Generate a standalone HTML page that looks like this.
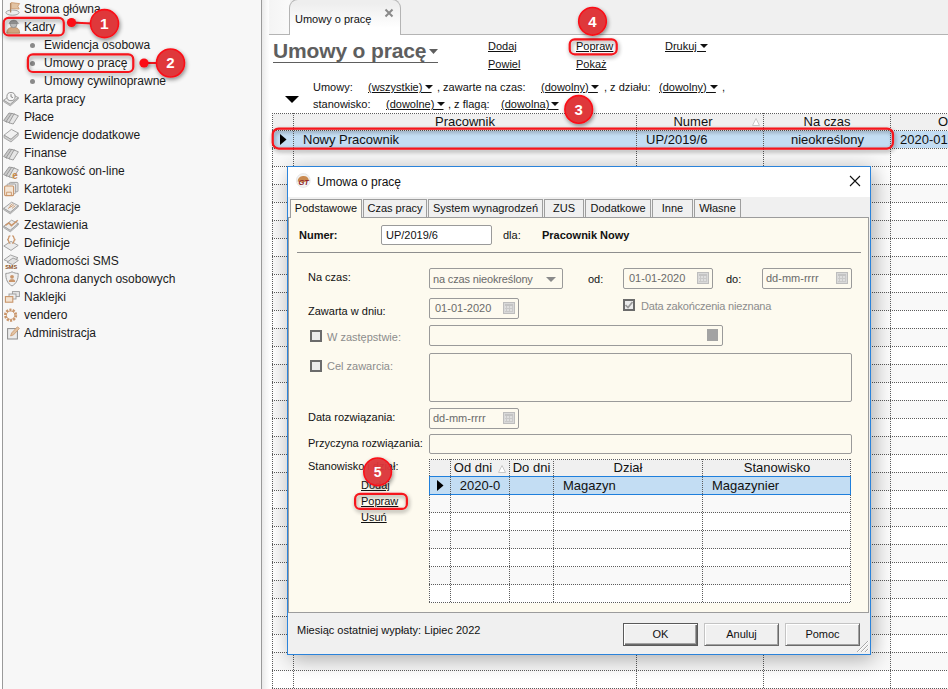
<!DOCTYPE html>
<html lang="pl">
<head>
<meta charset="utf-8">
<title>Umowy o pracę</title>
<style>
*{box-sizing:border-box;margin:0;padding:0}
html,body{width:948px;height:689px;overflow:hidden;background:#fff}
body{position:relative;font-family:"Liberation Sans",sans-serif;font-size:12px;color:#111}
.a{position:absolute;white-space:nowrap}
/* ---------- sidebar ---------- */
#side{left:2px;top:-8px;width:260px;height:705px;background:#f7f7f7;border:1px solid #9a9a9a;border-radius:0 7px 0 0}
#sideshadow{left:262px;top:0;width:8px;height:689px;background:linear-gradient(to right,#e9e9e9,#f8f8f8 60%,#fff)}
.it{left:24px;height:18px;line-height:18px;font-size:12px;color:#1a1a1a}
.sub{left:44px}
.bl{width:5px;height:5px;border-radius:50%;background:#8a8a8a;left:30px}
.ic{left:3px;width:16px;height:16px}
/* ---------- main ---------- */
#tabbar{left:270px;top:0;width:678px;height:34px;background:#f0f0f0}
#tabline{left:269px;top:34px;width:679px;height:1px;background:#b4b4b4}
#tableft{left:269px;top:0;width:21px;height:34px;background:linear-gradient(to right,#f4f4f4,#fafafa)}
#tab{left:289px;top:-1px;width:112px;height:36px;background:linear-gradient(#eeeeee 10%,#fff 80%);border:1px solid #b4b4b4;border-bottom:0;border-radius:9px 9px 0 0}
#title{left:273px;top:37px;font-size:21px;letter-spacing:-.15px;font-weight:700;color:#5e5e5e;line-height:28px}
.lk{font-size:11px;color:#111;text-decoration:underline;line-height:14px}
.ft{font-size:11px;color:#111;line-height:14px}
.tri{width:8px;height:4px;background:#111;clip-path:polygon(0 0,100% 0,50% 100%)}
/* ---------- grid ---------- */
.hl{height:1px;background:repeating-linear-gradient(to right,#6e6e6e 0 1px,transparent 1px 2px)}
.vl{width:1px;background:repeating-linear-gradient(to bottom,#6e6e6e 0 1px,transparent 1px 2px)}
.gh{font-size:13px;line-height:16px;color:#111;text-align:center}
.gc{font-size:13px;line-height:17px;color:#111}
/* ---------- dialog ---------- */
#dlg{left:287px;top:166px;width:584px;height:489px;background:#f0f0f0;border:1px solid #2b83da;box-shadow:3px 4px 20px 0 rgba(0,0,0,.32)}
#dlg .a{position:absolute}
#dw{left:1px;top:0;width:0;height:0}
#dw>.a{margin-top:-1px}
#dtitle{left:0;top:0;width:582px;height:30px;background:#fff}
#page{left:-1px;top:51px;width:581px;height:396px;background:#fdfaef;border:1px solid #9c9c9c}
.dt{top:33px;height:18px;border:1px solid #9e9e9e;border-bottom:0;background:#f0f0f0;font-size:11px;line-height:16px;text-align:center;color:#111}
.dt.on{top:33px;height:19px;background:#fdfaef;line-height:16px;z-index:2}
.lb{font-size:11px;line-height:14px;color:#111}
.dis{color:#8c8c8c}
.fld{border:1px solid #9a9a9a;border-radius:2px;background:#fdfaef;font-size:11px;line-height:18px;color:#6a6a6a;padding-left:5px}
.cb{width:12px;height:12px;border:2px solid #6b6b6b;background:#ececec}
.btn{top:457px;height:23px;width:75px;border:1px solid;border-color:#c4c4c4 #6a6a6a #6a6a6a #c4c4c4;background:#f0f0f0;box-shadow:inset 1px 1px 0 #fff,inset -1px -1px 0 #a2a2a2;font-size:11px;line-height:20px;text-align:center;color:#111}
.cal{width:12px;height:12px;border:1px solid #bdbdbd;background:linear-gradient(#c4c4c4 0 3px,transparent 3px),repeating-linear-gradient(to bottom,transparent 0 2px,#c9c9c9 2px 3px),repeating-linear-gradient(to right,#dedede 0 2px,#c9c9c9 2px 3px),#d6d6d6;background-size:auto,auto;box-shadow:inset 0 0 0 1px #d9d9d9}
.ih{font-size:13px;line-height:16px;text-align:center;color:#111}
</style>
</head>
<body>

<!-- ================= SIDEBAR ================= -->
<div class="a" id="side"></div>
<div class="a" id="sideshadow"></div>
<div id="sideitems">
<div class="a it" style="top:0px">Strona główna</div>
<div class="a it" style="top:18px">Kadry</div>
<div class="a bl" style="top:43px"></div><div class="a it sub" style="top:36px">Ewidencja osobowa</div>
<div class="a bl" style="top:61px"></div><div class="a it sub" style="top:54px">Umowy o pracę</div>
<div class="a bl" style="top:79px"></div><div class="a it sub" style="top:72px">Umowy cywilnoprawne</div>
<div class="a it" style="top:90px">Karta pracy</div>
<div class="a it" style="top:108px">Płace</div>
<div class="a it" style="top:126px">Ewidencje dodatkowe</div>
<div class="a it" style="top:144px">Finanse</div>
<div class="a it" style="top:162px">Bankowość on-line</div>
<div class="a it" style="top:180px">Kartoteki</div>
<div class="a it" style="top:198px">Deklaracje</div>
<div class="a it" style="top:216px">Zestawienia</div>
<div class="a it" style="top:234px">Definicje</div>
<div class="a it" style="top:252px">Wiadomości SMS</div>
<div class="a it" style="top:270px">Ochrona danych osobowych</div>
<div class="a it" style="top:288px">Naklejki</div>
<div class="a it" style="top:306px">vendero</div>
<div class="a it" style="top:324px">Administracja</div>
</div>
<svg class="a ic" style="top:1px;left:5px" viewBox="0 0 16 16"><ellipse cx="7.5" cy="11.6" rx="6.6" ry="2.6" fill="#ededed" stroke="#9a9a9a" stroke-width="0.9"/><path d="M5.6 2V11.5" stroke="#a98462" stroke-width="1.3"/><path d="M6.2 1.6L14.6 2.6L12.8 5.2L14.2 8L6.2 7.6Z" fill="#e2c3a3" stroke="#c9956a" stroke-width="0.8"/></svg>
<svg class="a ic" style="top:18px;left:5px" viewBox="0 0 16 16"><path d="M1.8 15.2C1.8 10.6 4.6 9.4 8.4 9.4C12.2 9.4 14.6 10.8 14.6 15.2Z" fill="#cfa580" stroke="#b38458" stroke-width="0.8"/><circle cx="8.6" cy="6.2" r="3.4" fill="#bdbdbd" stroke="#8a8a8a" stroke-width="0.8"/><path d="M4.6 4.6C5.4 1.6 11.6 1.4 12.6 4.4L13.6 5.4L4 5.6Z" fill="#9c9c9c" stroke="#808080" stroke-width="0.6"/></svg>
<svg class="a ic" style="top:91px" viewBox="0 0 16 16"><path d="M0.7 9.3L8.6 3.2L15.3 6.6L7.2 13.4Z" fill="#ececec" stroke="#9a9a9a" stroke-width="0.9"/><path d="M0.7 9.3L7.2 13.4L15.3 6.6L15.3 8L7.2 14.9L0.7 10.7Z" fill="#d0d0d0" stroke="#9a9a9a" stroke-width="0.7"/><circle cx="8" cy="5.6" r="4.1" fill="#f6f6f6" stroke="#8a8a8a" stroke-width="0.9"/><path d="M8 3.2V5.8L10 6.6" stroke="#777" stroke-width="0.9" fill="none"/></svg>
<svg class="a ic" style="top:109px" viewBox="0 0 16 16"><path d="M0.6 11.5L6 4L9.2 4.6L4 13.2Z" fill="#c8c8c8" stroke="#8c8c8c" stroke-width="0.8"/><path d="M3.2 12.6L8.6 4.4L12 5.2L7 14Z" fill="#d6d6d6" stroke="#8c8c8c" stroke-width="0.8"/><path d="M6 13.8L11 5L15.4 6.8L10.2 15Z" fill="#e6e6e6" stroke="#8c8c8c" stroke-width="0.8"/></svg>
<svg class="a ic" style="top:127px" viewBox="0 0 16 16"><path d="M1 8.2L8.4 2.4L15.2 6L8 12.4Z" fill="#f1f1f1" stroke="#9a9a9a" stroke-width="0.9"/><path d="M1 8.2L8 12.4L15.2 6V8.6L8 15L1 10.8Z" fill="#d2d2d2" stroke="#9a9a9a" stroke-width="0.8"/></svg>
<svg class="a ic" style="top:145px" viewBox="0 0 16 16"><path d="M0.6 11.5L6 4L9.2 4.6L4 13.2Z" fill="#c8c8c8" stroke="#8c8c8c" stroke-width="0.8"/><path d="M3.2 12.6L8.6 4.4L12 5.2L7 14Z" fill="#d6d6d6" stroke="#8c8c8c" stroke-width="0.8"/><path d="M6 13.8L11 5L15.4 6.8L10.2 15Z" fill="#e6e6e6" stroke="#8c8c8c" stroke-width="0.8"/></svg>
<svg class="a ic" style="top:163px" viewBox="0 0 16 16"><path d="M0.6 11.5L6 4L9.2 4.6L4 13.2Z" fill="#c8c8c8" stroke="#8c8c8c" stroke-width="0.8"/><path d="M3.2 12.6L8.6 4.4L12 5.2L7 14Z" fill="#d6d6d6" stroke="#8c8c8c" stroke-width="0.8"/><path d="M6 13.8L11 5L15.4 6.8L10.2 15Z" fill="#e6e6e6" stroke="#8c8c8c" stroke-width="0.8"/><text x="9.2" y="15.6" font-family="'Liberation Sans',sans-serif" font-weight="700" font-size="10px" fill="#c98a4a">e</text></svg>
<svg class="a ic" style="top:181px" viewBox="0 0 16 16"><rect x="6.4" y="1.4" width="8.6" height="9.4" rx="1" fill="#e0e0e0" stroke="#9a9a9a" stroke-width="0.9"/><rect x="4" y="3" width="8.6" height="9.6" rx="1" fill="#ebebeb" stroke="#9a9a9a" stroke-width="0.9"/><rect x="1.6" y="5" width="9" height="9.6" rx="1" fill="#f4e6d6" stroke="#c9956a" stroke-width="1.1"/><path d="M3.6 14V11.2H8.4V14" fill="none" stroke="#c9956a" stroke-width="0.9"/></svg>
<svg class="a ic" style="top:199px" viewBox="0 0 16 16"><path d="M0.7 9.3L8.6 3.2L15.3 6.6L7.2 13.4Z" fill="#ececec" stroke="#9a9a9a" stroke-width="0.9"/><path d="M0.7 9.3L7.2 13.4L15.3 6.6L15.3 8L7.2 14.9L0.7 10.7Z" fill="#d0d0d0" stroke="#9a9a9a" stroke-width="0.7"/><path d="M6.4 7.2L9.6 4.8M7.6 8.2L11 5.6M5 9.6L8 7.4M9 9.4L12.4 6.6" stroke="#c9956a" stroke-width="0.9"/></svg>
<svg class="a ic" style="top:217px" viewBox="0 0 16 16"><path d="M0.7 9.3L8.6 3.2L15.3 6.6L7.2 13.4Z" fill="#ececec" stroke="#9a9a9a" stroke-width="0.9"/><path d="M0.7 9.3L7.2 13.4L15.3 6.6L15.3 8L7.2 14.9L0.7 10.7Z" fill="#d0d0d0" stroke="#9a9a9a" stroke-width="0.7"/><path d="M2.4 8.4L6 6L8.4 8.6L14.8 3.2" fill="none" stroke="#c9956a" stroke-width="1.5"/></svg>
<svg class="a ic" style="top:235px" viewBox="0 0 16 16"><path d="M0.8 11L8 6.4L15.2 10.4L8 15.4Z" fill="#ececec" stroke="#9a9a9a" stroke-width="0.9"/><path d="M7.4 0.8C5.8 0.8 5.8 1.6 5.8 2.6C5.8 3.8 5.4 4.4 4.2 4.6C5.4 4.8 5.8 5.4 5.8 6.6C5.8 7.6 5.8 8.4 7.4 8.4M9.2 0.8C10.8 0.8 10.8 1.6 10.8 2.6C10.8 3.8 11.2 4.4 12.4 4.6C11.2 4.8 10.8 5.4 10.8 6.6C10.8 7.6 10.8 8.4 9.2 8.4" fill="none" stroke="#c9956a" stroke-width="1.3"/></svg>
<svg class="a ic" style="top:253px" viewBox="0 0 16 16"><path d="M1 6.8L7.6 2L15 4.8L8.4 9.8Z" fill="#ededed" stroke="#9a9a9a" stroke-width="0.9"/><path d="M4 9.2L10 5L15.4 7.4L9.6 11.6Z" fill="#e2e2e2" stroke="#9a9a9a" stroke-width="0.9"/><text x="8.2" y="15.6" text-anchor="middle" font-family="'Liberation Sans',sans-serif" font-weight="700" font-size="5.6px" fill="#8a4f22">SMS</text></svg>
<svg class="a ic" style="top:271px;left:4px" viewBox="0 0 16 16"><path d="M8 0.8C10 2 12.2 2.4 14.2 2.4C14.4 8.4 12.4 12.6 8 15C3.6 12.6 1.6 8.4 1.8 2.4C3.8 2.4 6 2 8 0.8Z" fill="#efefef" stroke="#9a9a9a" stroke-width="1"/><circle cx="8" cy="5.8" r="1.9" fill="#c9956a"/><path d="M4.8 11C4.8 8.6 6.2 8.2 8 8.2C9.8 8.2 11.2 8.6 11.2 11Z" fill="#c9956a"/></svg>
<svg class="a ic" style="top:289px;left:4px" viewBox="0 0 16 16"><rect x="8.4" y="2.6" width="7" height="5" fill="#e6e6e6" stroke="#9a9a9a" stroke-width="0.9"/><rect x="5" y="5" width="7" height="5" fill="#ededed" stroke="#9a9a9a" stroke-width="0.9"/><rect x="1.4" y="7.6" width="7.4" height="5.6" fill="#f3e3d1" stroke="#c9956a" stroke-width="1.1"/></svg>
<svg class="a ic" style="top:307px;left:3px" viewBox="0 0 16 16"><circle cx="7.6" cy="8.2" r="5.3" fill="none" stroke="#c9956a" stroke-width="2.6" stroke-dasharray="2.1 1.2"/><circle cx="7.6" cy="8.2" r="4.2" fill="none" stroke="#c9956a" stroke-width="0.8"/></svg>
<svg class="a ic" style="top:325px;left:5px" viewBox="0 0 16 16"><rect x="2.6" y="3.6" width="9.8" height="10.4" fill="#ececec" stroke="#8c8c8c" stroke-width="1"/><path d="M5.6 11L6.6 8L12.4 1.8L14.4 3.4L8.6 9.8Z" fill="#e2c3a3" stroke="#c9956a" stroke-width="0.8"/></svg>

<!-- ================= MAIN ================= -->
<div class="a" id="tabbar"></div>
<div class="a" id="tableft"></div>
<div class="a" id="tabline"></div>
<div class="a" id="tab"></div>
<div class="a" style="left:295px;top:12px;font-size:11px;line-height:14px;color:#111">Umowy o pracę</div>
<svg class="a" style="left:384px;top:8px" width="10" height="10" viewBox="0 0 10 10"><path d="M1.5 1.5L8.5 8.5M8.5 1.5L1.5 8.5" stroke="#8a8a8a" stroke-width="2" fill="none"/></svg>

<div class="a" id="title">Umowy o pracę</div>
<div class="a" style="left:273px;top:62px;width:165px;height:1px;background:#5e5e5e"></div>
<div class="a tri" style="left:429px;top:49px;width:9px;height:5px;background:#5e5e5e"></div>

<div class="a lk" style="left:488px;top:39px">Dodaj</div>
<div class="a lk" style="left:488px;top:57px">Powiel</div>
<div class="a lk" style="left:576px;top:39px">Popraw</div>
<div class="a lk" style="left:576px;top:57px">Pokaż</div>
<div class="a lk" style="left:665px;top:39px">Drukuj&nbsp;&nbsp;&nbsp;</div>
<div class="a tri" style="left:700px;top:44px"></div>

<svg class="a" style="left:285px;top:96px" width="14" height="7" viewBox="0 0 14 7"><path d="M0 0H14L7 7Z" fill="#000"/></svg>
<div class="a ft" style="left:313px;top:80px">Umowy:</div>
<div class="a lk" style="left:368px;top:80px">(wszystkie)&nbsp;&nbsp;&nbsp;</div><div class="a tri" style="left:425px;top:85px"></div>
<div class="a ft" style="left:437px;top:80px">, zawarte na czas:</div>
<div class="a lk" style="left:541px;top:80px">(dowolny)&nbsp;&nbsp;&nbsp;</div><div class="a tri" style="left:591px;top:85px"></div>
<div class="a ft" style="left:604px;top:80px">, z działu:</div>
<div class="a lk" style="left:659px;top:80px">(dowolny)&nbsp;&nbsp;&nbsp;</div><div class="a tri" style="left:710px;top:85px"></div>
<div class="a ft" style="left:722px;top:80px">,</div>
<div class="a ft" style="left:313px;top:97px">stanowisko:</div>
<div class="a lk" style="left:386px;top:97px">(dowolne)&nbsp;&nbsp;&nbsp;</div><div class="a tri" style="left:437px;top:102px"></div>
<div class="a ft" style="left:448px;top:97px">, z flagą:</div>
<div class="a lk" style="left:501px;top:97px">(dowolna)&nbsp;&nbsp;&nbsp;</div><div class="a tri" style="left:551px;top:102px"></div>


<!-- ================= GRID ================= -->
<div id="grid">
<div class="a" style="left:273px;top:114px;width:675px;height:16px;background:#f0f0f0"></div>
<div class="a" style="left:273px;top:131px;width:675px;height:17px;background:#c3ddf3"></div>
<svg class="a" style="left:272px;top:113px" width="676" height="576" shape-rendering="crispEdges">
<defs>
<pattern id="ph" width="2" height="18" patternUnits="userSpaceOnUse" patternTransform="translate(0,17)"><rect width="1" height="1" fill="#5c5c5c"/></pattern>
<pattern id="pd" width="2" height="1" patternUnits="userSpaceOnUse"><rect width="1" height="1" fill="#5c5c5c"/></pattern>
<pattern id="pv" width="1" height="2" patternUnits="userSpaceOnUse"><rect width="1" height="1" fill="#5c5c5c"/></pattern>
<pattern id="alt" width="4" height="36" patternUnits="userSpaceOnUse" patternTransform="translate(0,35)"><rect width="4" height="18" fill="#f9f9f9"/></pattern>
</defs>
<rect x="0" y="35" width="676" height="541" fill="url(#alt)"/>
<rect x="0" y="0" width="676" height="1" fill="url(#pd)"/>
<rect x="0" y="17" width="676" height="559" fill="url(#ph)"/>
<rect x="0" y="0" width="1" height="576" fill="url(#pv)"/>
<rect x="21" y="0" width="1" height="576" fill="url(#pv)"/>
<rect x="364" y="0" width="1" height="576" fill="url(#pv)"/>
<rect x="491" y="0" width="1" height="576" fill="url(#pv)"/>
<rect x="618" y="0" width="1" height="576" fill="url(#pv)"/>
</svg>

<div class="a gh" style="left:294px;top:114px;width:342px">Pracownik</div>
<div class="a gh" style="left:637px;top:114px;width:112px">Numer</div>
<div class="a gh" style="left:764px;top:114px;width:126px">Na czas</div>
<div class="a gh" style="left:938px;top:114px">Od</div>
<svg class="a" style="left:752px;top:118px" width="8" height="8" viewBox="0 0 8 8"><path d="M0.5 7.5L4 0.5L7.5 7.5Z" fill="#fff" stroke="#c8c8c8" stroke-width="1"/></svg>
<div class="a gc" style="left:303px;top:131px">Nowy Pracownik</div>
<div class="a gc" style="left:646px;top:131px">UP/2019/6</div>
<div class="a gc" style="left:791px;top:131px">nieokreślony</div>
<div class="a gc" style="left:900px;top:131px">2020-01-01</div>
<svg class="a" style="left:280px;top:134px" width="7" height="11" viewBox="0 0 7 11"><path d="M0 0L6.5 5.5L0 11Z" fill="#000"/></svg>
</div>

<div class="a" id="dlg">
<div class="a" id="dtitle"></div>
<div class="a" id="dw">
<div class="a" style="left:28px;top:8px;font-size:12px;line-height:16px;color:#111">Umowa o pracę</div>
<svg class="a" style="left:560px;top:9px" width="12" height="12" viewBox="0 0 12 12"><path d="M1 1L11 11M11 1L1 11" stroke="#111" stroke-width="1.1" fill="none"/></svg>
<svg class="a" style="left:7px;top:7px" width="15" height="15" viewBox="0 0 15 15"><circle cx="7.3" cy="7.5" r="6.9" fill="#f3f3f3" stroke="#e2e2e2" stroke-width="0.8"/><path d="M1.6 8.6A5.8 5.8 0 0 1 13 7.4L7 9.4Z" fill="#c98a50"/><text x="7.6" y="12.4" text-anchor="middle" font-family="'Liberation Sans',sans-serif" font-style="italic" font-weight="700" font-size="7.5px" fill="#8c1c2c">GT</text></svg>
<div class="a dt on" style="left:1px;width:72px">Podstawowe</div>
<div class="a dt" style="left:74px;width:64px">Czas pracy</div>
<div class="a dt" style="left:139px;width:115px">System wynagrodzeń</div>
<div class="a dt" style="left:255px;width:40px">ZUS</div>
<div class="a dt" style="left:296px;width:66px">Dodatkowe</div>
<div class="a dt" style="left:363px;width:41px">Inne</div>
<div class="a dt" style="left:405px;width:47px">Własne</div>
<div class="a" id="page"></div>

<div class="a lb" style="left:10px;top:62px;font-weight:700">Numer:</div>
<div class="a fld" style="left:92px;top:59px;width:111px;height:20px;background:#fff;color:#111;padding-left:4px">UP/2019/6</div>
<div class="a lb" style="left:214px;top:62px">dla:</div>
<div class="a lb" style="left:253px;top:62px;font-weight:700">Pracownik Nowy</div>
<div class="a" style="left:8px;top:86px;width:564px;height:1px;background:#8e8e8e"></div>

<div class="a lb" style="left:19px;top:104px">Na czas:</div>
<div class="a fld" style="left:140px;top:102px;width:134px;height:21px;padding-left:3px;letter-spacing:-.15px;line-height:20px">na czas nieokreślony</div>
<div class="a tri" style="left:257px;top:111px;width:10px;height:5px;background:#8a8a8a"></div>
<div class="a lb" style="left:299px;top:106px">od:</div>
<div class="a fld" style="left:334px;top:102px;width:90px;height:21px;padding-left:5px">01-01-2020</div>
<div class="a cal" style="left:408px;top:106px"></div>
<div class="a lb" style="left:437px;top:106px">do:</div>
<div class="a fld" style="left:473px;top:102px;width:90px;height:21px;padding-left:3px">dd-mm-rrrr</div>
<div class="a cal" style="left:547px;top:106px"></div>

<div class="a lb" style="left:19px;top:138px">Zawarta w dniu:</div>
<div class="a fld" style="left:140px;top:132px;width:90px;height:21px;padding-left:5px">01-01-2020</div>
<div class="a cal" style="left:214px;top:136px"></div>
<div class="a cb" style="left:334px;top:133px"></div>
<svg class="a" style="left:335px;top:134px" width="10" height="10" viewBox="0 0 10 10"><path d="M1.5 5L4 7.5L8.5 2" stroke="#999" stroke-width="1.7" fill="none"/></svg>
<div class="a lb dis" style="left:352px;top:133px;letter-spacing:-.2px">Data zakończenia nieznana</div>

<div class="a cb" style="left:21px;top:164px"></div>
<div class="a lb dis" style="left:38px;top:164px">W zastępstwie:</div>
<div class="a fld" style="left:140px;top:159px;width:294px;height:21px"></div>
<div class="a" style="left:418px;top:163px;width:11px;height:12px;background:#a3a3a3"></div>

<div class="a cb" style="left:21px;top:194px"></div>
<div class="a lb dis" style="left:38px;top:193px">Cel zawarcia:</div>
<div class="a fld" style="left:140px;top:187px;width:423px;height:49px"></div>

<div class="a lb" style="left:19px;top:244px">Data rozwiązania:</div>
<div class="a fld" style="left:140px;top:242px;width:90px;height:21px;padding-left:3px">dd-mm-rrrr</div>
<div class="a cal" style="left:214px;top:246px"></div>

<div class="a lb" style="left:19px;top:270px">Przyczyna rozwiązania:</div>
<div class="a fld" style="left:140px;top:268px;width:423px;height:20px"></div>

<div class="a lb" style="left:19px;top:293px">Stanowisko i dział:</div>
<div class="a lk" style="left:72px;top:312px">Dodaj</div>
<div class="a lk" style="left:72px;top:328px">Popraw</div>
<div class="a lk" style="left:72px;top:344px">Usuń</div>
<div class="a" style="left:140px;top:293px;width:422px;height:144px;background:#fff"></div>
<div class="a" style="left:141px;top:294px;width:420px;height:17px;background:#f0f0f0"></div>
<div class="a" style="left:140px;top:310px;width:422px;height:19px;background:#c3ddf3"></div>
<svg class="a" style="left:140px;top:293px" width="422" height="144" shape-rendering="crispEdges">
<defs>
<pattern id="qh" width="2" height="18" patternUnits="userSpaceOnUse" patternTransform="translate(0,53)"><rect width="1" height="1" fill="#5c5c5c"/></pattern>
<pattern id="qalt" width="4" height="36" patternUnits="userSpaceOnUse" patternTransform="translate(0,36)"><rect width="4" height="18" fill="#f9f9f9"/></pattern>
</defs>
<rect x="0" y="36" width="422" height="108" fill="url(#qalt)"/>
<rect x="0" y="0" width="423" height="1" fill="url(#pd)"/>
<rect x="0" y="53" width="423" height="91" fill="url(#qh)"/>
<rect x="0" y="0" width="1" height="144" fill="url(#pv)"/>
<rect x="21" y="0" width="1" height="144" fill="url(#pv)"/>
<rect x="80" y="0" width="1" height="144" fill="url(#pv)"/>
<rect x="124" y="0" width="1" height="144" fill="url(#pv)"/>
<rect x="273" y="0" width="1" height="144" fill="url(#pv)"/>
<rect x="421" y="0" width="1" height="144" fill="url(#pv)"/>
</svg>
<div class="a ih" style="left:160px;top:294px;width:48px">Od dni</div>
<svg class="a" style="left:209px;top:299px" width="8" height="8" viewBox="0 0 8 8"><path d="M0.5 7.5L4 0.5L7.5 7.5Z" fill="#fff" stroke="#c8c8c8" stroke-width="1"/></svg>
<div class="a ih" style="left:221px;top:294px;width:43px">Do dni</div>
<div class="a ih" style="left:265px;top:294px;width:148px">Dział</div>
<div class="a ih" style="left:414px;top:294px;width:148px">Stanowisko</div>
<div class="a" style="left:140px;top:310px;width:422px;height:19px;border:1px solid #1f7fdc"></div>
<svg class="a" style="left:148px;top:314px" width="7" height="11" viewBox="0 0 7 11"><path d="M0 0L6.5 5.5L0 11Z" fill="#000"/></svg>
<div class="a gc" style="left:162px;top:311px;width:58px;text-align:center">2020-0</div>
<div class="a gc" style="left:274px;top:311px">Magazyn</div>
<div class="a gc" style="left:423px;top:311px">Magazynier</div>


<div class="a lb" style="left:8px;top:457px">Miesiąc ostatniej wypłaty: Lipiec 2022</div>
<div class="a btn" style="left:334px;border-color:#5a5a5a;box-shadow:inset 1px 1px 0 #fff,inset -1px -1px 0 #6a6a6a,inset -2px -2px 0 #a2a2a2">OK</div>
<div class="a btn" style="left:415px">Anuluj</div>
<div class="a btn" style="left:496px">Pomoc</div>
<svg class="a" style="left:567px;top:474px" width="13" height="13" viewBox="0 0 13 13"><path d="M12 1L1 12M12 5L5 12M12 9L9 12" stroke="#a8a8a8" stroke-width="1" fill="none"/><path d="M13 1L2 12M13 5L6 12M13 9L10 12" stroke="#fff" stroke-width="1" fill="none"/></svg>
</div>
</div>


<svg class="a" id="anno" style="left:0;top:0;pointer-events:none" width="948" height="689" viewBox="0 0 948 689">
<defs>
<filter id="sh" x="-30%" y="-30%" width="160%" height="170%"><feGaussianBlur in="SourceAlpha" stdDeviation="2.2"/><feOffset dx="1" dy="2" result="b"/><feComponentTransfer><feFuncA type="linear" slope="0.45"/></feComponentTransfer><feMerge><feMergeNode/><feMergeNode in="SourceGraphic"/></feMerge></filter>
</defs>
<g filter="url(#sh)" fill="none" stroke="#f5141c" stroke-width="2.2">
<rect x="3.7" y="17.9" width="60.1" height="17.5" rx="5"/>
<rect x="27.9" y="54.4" width="105.4" height="17.6" rx="5"/>
<rect x="569.7" y="39.3" width="47" height="15" rx="5"/>
<rect x="355.1" y="493.9" width="51.8" height="15" rx="5"/>
<rect x="272.7" y="128.6" width="620.3" height="20" rx="6"/>
<path d="M71.5 22.5L92 23.5M144 63H158" stroke-width="2"/>
</g>
<g filter="url(#sh)">
<circle cx="71.5" cy="22.5" r="4.6" fill="#fb0a12"/>
<circle cx="144" cy="63" r="4.6" fill="#fb0a12"/>
<g fill="#df383b" stroke="#fb1018" stroke-width="1.6">
<circle cx="104.5" cy="23.6" r="14"/>
<circle cx="170.5" cy="63" r="14"/>
<circle cx="578.7" cy="109.4" r="13.8"/>
<circle cx="592.5" cy="21.3" r="13.8"/>
<circle cx="377.6" cy="471.8" r="13.8" fill-opacity=".93"/>
</g>
</g>
<g fill="#fff" font-family="'Liberation Sans',sans-serif" font-weight="700" font-size="15px" text-anchor="middle">
<text x="104.3" y="29.2" font-size="15.5px">1</text>
<text x="170.5" y="68.4">2</text>
<text x="578.7" y="114.8">3</text>
<text x="592.5" y="26.7">4</text>
<text x="377.6" y="476.8" font-size="14px">5</text>
</g>
</svg>


</body>
</html>
